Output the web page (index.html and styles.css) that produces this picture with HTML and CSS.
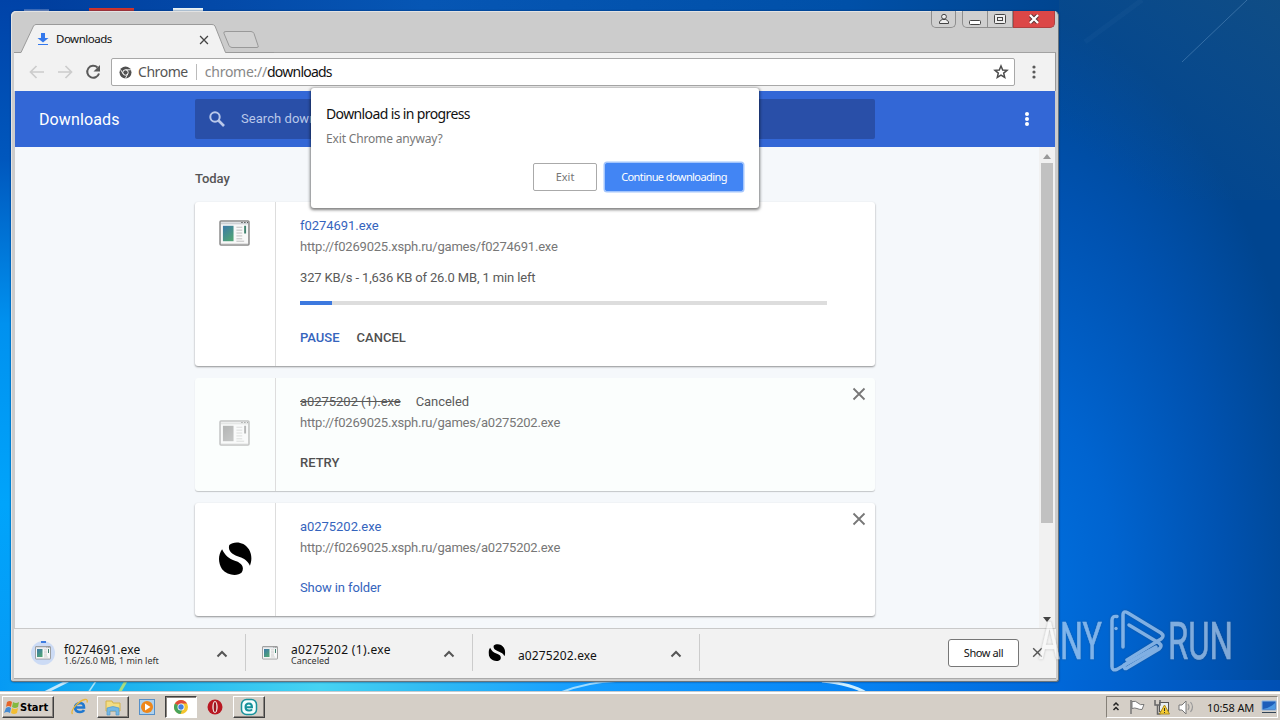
FILE: index.html
```html
<!DOCTYPE html>
<html lang="en">
<head>
<meta charset="utf-8">
<title>Downloads</title>
<link rel="stylesheet" href="styles.css">
</head>
<body>
<svg class="defs" width="0" height="0" aria-hidden="true">
  <defs>
    <linearGradient id="pane" x1="0" y1="0" x2=".6" y2="1"><stop offset="0" stop-color="#3b78a8"/><stop offset="1" stop-color="#4fa277"/></linearGradient>
    <symbol id="app" viewBox="0 0 32 28">
      <rect x="1" y="1" width="30" height="25" rx="1" fill="#f8f8f8" stroke="#8b8b8b" stroke-width="1.6"/>
      <path d="M2 3.5h28" stroke="#ccd0d4" stroke-width="2"/>
      <path d="M23 2.6h1.5M26 2.6h1.5M29 2.6h1" stroke="#555" stroke-width="1.2"/>
      <rect x="4" y="6" width="11" height="16" fill="url(#pane)"/>
      <path d="M18 7.5h6M18 10.5h6M18 13.5h6M18 16.5h6M18 19.5h6M18 22h8" stroke="#bbb"/>
      <path d="M27 6v8" stroke="#41826f" stroke-width="2"/>
      <path d="M2 24.5h28" stroke="#ddd"/>
    </symbol>
    <symbol id="ess" viewBox="0 0 32 32">
      <path d="M10 3C14-1 24-1 29 7c3 5 3 11 1 16-2-5-6-7-10-8.500C14 12.500 8 9 10 3Z"/>
      <path d="M3 7C6 13 9 16 16 18.500c6 2 9 6 6 11-4 4-14 3-19-3C-1 20-1 13 3 7Z"/>
    </symbol>
    <symbol id="cross" viewBox="0 0 14 14"><path d="M1.500 1.500l11 11M12.500 1.500l-11 11" fill="none" stroke="currentColor" stroke-width="1.800"/></symbol>
    <symbol id="caret" viewBox="0 0 12 8"><path d="M1.500 6.500L6 2l4.500 4.500" fill="none" stroke="#555" stroke-width="2"/></symbol>
  </defs>
</svg>
<div class="desktop">
  <svg class="wallpaper" width="1280" height="720" viewBox="0 0 1280 720">
    <defs>
      <radialGradient id="glow" gradientUnits="userSpaceOnUse" cx="1010" cy="600" r="560" gradientTransform="translate(1010 600) scale(.55 1.050) translate(-1010 -600)">
        <stop offset="0" stop-color="#0072e2"/><stop offset=".35" stop-color="#0064d0"/><stop offset=".7" stop-color="#0052b0"/><stop offset="1" stop-color="#004590"/>
      </radialGradient>
      <linearGradient id="left" x1="0" y1="0" x2="0" y2="1"><stop offset="0" stop-color="#0043a8"/><stop offset=".22" stop-color="#0057bd"/><stop offset=".45" stop-color="#0091ef"/><stop offset=".7" stop-color="#00a4fb"/><stop offset="1" stop-color="#0898f4"/></linearGradient>
      <linearGradient id="bottom"><stop offset="0" stop-color="#069af4"/><stop offset=".1" stop-color="#1eb3ee"/><stop offset=".25" stop-color="#46d3f2"/><stop offset=".33" stop-color="#32bcf2"/><stop offset=".45" stop-color="#169eff"/><stop offset=".65" stop-color="#0786f6"/><stop offset=".82" stop-color="#0068da"/><stop offset="1" stop-color="#0050b4"/></linearGradient>
      <linearGradient id="top"><stop offset="0" stop-color="#003c9c"/><stop offset=".4" stop-color="#0656b4"/><stop offset=".8" stop-color="#0050a8"/><stop offset="1" stop-color="#004590"/></linearGradient>
      <linearGradient id="corner" x1=".3" y1=".9" x2="1" y2="0"><stop offset="0" stop-color="#14508a" stop-opacity="0"/><stop offset="1" stop-color="#165080" stop-opacity=".7"/></linearGradient>
    </defs>
    <rect width="1280" height="720" fill="url(#glow)"/>
    <rect width="1059" height="14" fill="url(#top)"/>
    <rect width="40" height="720" fill="url(#left)"/>
    <rect y="680" width="1280" height="14" fill="url(#bottom)"/>
    <rect x="1059" width="221" height="200" fill="url(#corner)"/>
    <path d="M1247 0L1182 62" stroke="#5f93c4" stroke-opacity=".5"/>
    <path d="M1142 0L1085 42" stroke="#5f93c4" stroke-opacity=".06" stroke-width="5"/>
    <path d="M44 693L68 681" stroke="#fff" stroke-opacity=".75" stroke-width="3"/>
    <path d="M88 693L96 681" stroke="#a8e4f8" stroke-width="1.500"/>
    <path d="M119 693L126 681" stroke="#a8dc80" stroke-width="3"/>
    <path d="M562 692q26-10 54-11" fill="none" stroke="#a0dcff" stroke-width="2"/>
    <path d="M822 681q30 3 44 12" fill="none" stroke="#cdeeff" stroke-width="3"/>
    <path d="M24 10.500h25" stroke="#7f99cf" stroke-width="2"/><path d="M89 9.500h45" stroke="#d1342b" stroke-width="3"/><path d="M173 9.500h30" stroke="#e8f2f4" stroke-width="3"/>
  </svg>

  <main class="window">
    <div class="titlebar">
      <svg class="tabs" width="260" height="29" viewBox="0 0 260 29">
        <path d="M0 28.500H7L19.500 2Q20.500 .5 22 .5H198Q200 .5 201 2L211.500 28.500H260V29H0Z" fill="#f2f2f2"/>
        <path d="M0 28.500H7L19.500 2Q20.500 .5 22 .5H198Q200 .5 201 2L211.500 28.500H260" fill="none" stroke="#9a9a9a"/>
        <path d="M212 7.500h25q2 0 3 2l4 12q1 2-1 2h-25q-2 0-3-2l-5-12q-1-2 2-2Z" fill="#d2d2d2" stroke="#999"/>
        <path d="M27 9h4v5h3.500L29 18.500 23.500 14H27Z" fill="#3478ec"/><path d="M24 20.500h10" stroke="#3478ec" stroke-width="1"/>
      </svg>
      <span class="tab-title">Downloads</span>
      <svg class="tab-close" width="10" height="10"><use href="#cross"/></svg>
      <div class="controls">
        <span class="ctl user"><svg width="12" height="12" viewBox="0 0 12 12" fill="#eee" stroke="#444"><path d="M1.500 10.500V9Q2 7 4.500 6.500H7.500Q10 7 10.500 9v1.500Z"/><circle cx="6" cy="3.700" r="2.400"/></svg></span>
        <span class="ctl min"><svg width="12" height="12" viewBox="0 0 12 12"><rect x=".5" y="7.500" width="11" height="4" rx="1" fill="#fff" stroke="#444"/></svg></span>
        <span class="ctl max"><svg width="12" height="12" viewBox="0 0 12 12" fill="#eee" stroke="#444"><rect x=".5" y="1.500" width="11" height="9" rx="1"/><rect x="3.500" y="4.500" width="5" height="3"/></svg></span>
        <span class="ctl shut"><svg width="12" height="12" viewBox="0 0 12 12"><path d="M2.500 2.500l7 7M9.500 2.500l-7 7" stroke="#533" stroke-width="4"/><path d="M2 2l8 8M10 2l-8 8" stroke="#fff" stroke-width="2.300"/></svg></span>
      </div>
    </div>

    <div class="toolbar">
      <svg class="nav" width="76" height="18" viewBox="0 0 76 18" fill="none">
        <path d="M16 9H3M8.500 3L2.500 9l6 6" stroke="#ccc" stroke-width="1.700"/><path d="M30 9h13M37.500 3l6 6-6 6" stroke="#ccc" stroke-width="1.700"/>
        <path d="M69.500 4.500A6 6 0 1 0 71 10.500" stroke="#5a5a5a" stroke-width="2"/><path d="M72 2v6.500h-6.500Z" fill="#5a5a5a"/>
      </svg>
      <div class="omnibox">
        <svg width="13" height="13" viewBox="0 0 13 13"><circle cx="6.500" cy="6.500" r="6" fill="#505050"/><circle cx="6.500" cy="6.500" r="2.700" fill="none" stroke="#fff"/><path d="M6.500 3.800h5.300M4.100 7.800L1.500 3.500M8.800 7.800L6.400 12.500" stroke="#fff" stroke-width=".9"/></svg>
        <span class="origin">Chrome</span><i></i><span class="scheme">chrome://</span><span class="path">downloads</span>
        <svg class="star" width="16" height="16" viewBox="0 0 16 16"><path d="M8 2l1.700 4 4.300.3-3.300 2.800 1 4.300L8 11.100l-3.700 2.300 1-4.300L2 6.300 6.300 6Z" fill="none" stroke="#4c4c4c" stroke-width="1.500"/></svg>
      </div>
      <svg class="menu" width="4" height="14" fill="#5a5a5a"><circle cx="2" cy="2" r="1.600"/><circle cx="2" cy="7" r="1.600"/><circle cx="2" cy="12" r="1.600"/></svg>
    </div>

    <header class="header">
      <h1>Downloads</h1>
      <div class="search"><svg width="18" height="18" viewBox="0 0 18 18" fill="none" stroke="#b9c8ea"><circle cx="7" cy="7" r="4.700" stroke-width="2"/><path d="M10.500 10.500l5.500 5.500" stroke-width="2.600"/></svg><span>Search downloads</span></div>
      <svg class="more" width="4" height="14" fill="#fff"><circle cx="2" cy="2" r="2"/><circle cx="2" cy="7" r="2"/><circle cx="2" cy="12" r="2"/></svg>
    </header>

    <div class="content">
      <div class="list">
        <h2>Today</h2>
        <section class="card first">
          <div class="thumb top"><svg width="31" height="27"><use href="#app"/></svg></div>
          <div class="info">
            <div class="name link">f0274691.exe</div>
            <div class="url">http://f0269025.xsph.ru/games/f0274691.exe</div>
            <div class="status">327 KB/s - 1,636 KB of 26.0 MB, 1 min left</div>
            <div class="progress"><b></b></div>
            <div class="actions after-bar"><span class="link">PAUSE</span><span>CANCEL</span></div>
          </div>
        </section>
        <section class="card off">
          <div class="thumb gray"><svg width="31" height="27"><use href="#app"/></svg></div>
          <div class="info">
            <div class="name"><s>a0275202 (1).exe</s><span class="tag">Canceled</span></div>
            <div class="url">http://f0269025.xsph.ru/games/a0275202.exe</div>
            <div class="actions"><span>RETRY</span></div>
          </div>
          <svg class="remove" width="14" height="14"><use href="#cross"/></svg>
        </section>
        <section class="card">
          <div class="thumb"><svg width="33" height="33"><use href="#ess"/></svg></div>
          <div class="info">
            <div class="name link">a0275202.exe</div>
            <div class="url">http://f0269025.xsph.ru/games/a0275202.exe</div>
            <div class="actions plain"><span class="link">Show in folder</span></div>
          </div>
          <svg class="remove" width="14" height="14"><use href="#cross"/></svg>
        </section>
      </div>
      <div class="scroll">
        <svg width="8" height="5"><path d="M0 5L4 0l4 5Z" fill="#999"/></svg>
        <div class="handle"></div>
        <svg class="down" width="8" height="5"><path d="M0 0h8L4 5Z" fill="#444"/></svg>
      </div>
    </div>

    <footer class="shelf">
      <div class="item">
        <svg class="pic" width="26" height="26" viewBox="0 0 26 26"><circle cx="13" cy="13" r="12" fill="#ccdbf5"/><path d="M11 2h5" stroke="#3e7de0" stroke-width="2"/><use href="#app" x="4.500" y="6" width="17" height="14"/></svg>
        <div class="words"><div class="file w1">f0274691.exe</div><div class="note">1.6/26.0 MB, 1 min left</div></div>
        <svg class="caret" width="12" height="8"><use href="#caret"/></svg>
      </div>
      <div class="item">
        <svg class="pic" width="26" height="26" viewBox="0 0 26 26"><use href="#app" x="4.500" y="6" width="17" height="14"/></svg>
        <div class="words"><div class="file w2">a0275202 (1).exe</div><div class="note">Canceled</div></div>
        <svg class="caret" width="12" height="8"><use href="#caret"/></svg>
      </div>
      <div class="item">
        <svg class="pic" width="26" height="26" viewBox="0 0 26 26"><use href="#ess" x="4.500" y="4" width="17" height="17"/></svg>
        <div class="words single"><div class="file w1">a0275202.exe</div></div>
        <svg class="caret" width="12" height="8"><use href="#caret"/></svg>
      </div>
      <button class="all">Show all</button>
      <svg class="shelf-close" width="11" height="11"><use href="#cross"/></svg>
    </footer>
  </main>

  <div class="dialog" role="dialog">
    <div class="ask">Download is in progress</div>
    <div class="detail">Exit Chrome anyway?</div>
    <div class="buttons"><button>Exit</button><button class="primary">Continue downloading</button></div>
  </div>

  <svg class="watermark" width="240" height="80" viewBox="0 0 240 80">
    <g font-family="Roboto, sans-serif" font-size="52" fill="#fff" stroke="#fff" stroke-width=".6">
      <text x="9" y="53" textLength="63" lengthAdjust="spacingAndGlyphs">ANY</text>
      <text x="138" y="53" textLength="65" lengthAdjust="spacingAndGlyphs">RUN</text>
    </g>
    <g fill="none" stroke="#fff" stroke-width="3.500" stroke-linejoin="round" stroke-linecap="round">
      <path d="M86 22.500v0M87 23"/><path d="M87 12q-5-1-5 4V64q0 5 5 3l32-19" transform="translate(0 -1) scale(1 .96)"/><path d="M93 41V9q0-5 5-2l33 20q4 3 0 6L97 54"/><path d="M99 19l30 18q4 3 0 6L97 62q-3 2-3-3l32-18"/>
    </g>
  </svg>

  <div class="taskbar">
    <div class="start"><svg width="16" height="16" viewBox="0 0 16 16"><path d="M3 3q3-2 5 0L7 8Q4 6 2 8Z" fill="#e66528"/><path d="M9 3q3 2 6 0l-1 5q-3 2-6 0Z" fill="#83b942"/><path d="M2 9q3-2 5 0l-1 5q-3-2-6 0Z" fill="#458bd2"/><path d="M8 9q3 2 6 0l-1 5q-3 2-6 0Z" fill="#f2bd32"/></svg><span>Start</span></div>
    <span class="app ie"><svg width="18" height="18" viewBox="0 0 18 18" fill="none"><path d="M4.500 9.500H13Q13 5 9 5 4 5.500 4 10q.5 4 5 4 3 0 4-2" stroke="#2078cf" stroke-width="2.600"/><path d="M1.500 16C-1 13 7 3 14 1.500q3-.5 2 3" stroke="#eab535" stroke-width="1.300"/></svg></span>
    <span class="app raised"><svg width="18" height="18" viewBox="0 0 18 18"><path d="M2 3h6l1 2h7v8H2Z" fill="#f3dd83" stroke="#d4b24b"/><path d="M3 10q6-3 12 0v7h-3v-4H6v4H3Z" fill="#74b8e5" stroke="#5399cc" stroke-width=".7"/></svg></span>
    <span class="app"><svg width="18" height="18" viewBox="0 0 18 18"><rect x="1.500" y="1.500" width="15" height="15" fill="#aed1ed" stroke="#558fc8"/><circle cx="9" cy="9" r="6" fill="#ee871b"/><path d="M7 5.500l5.500 3.500L7 12.500Z" fill="#fff"/></svg></span>
    <span class="app raised pressed"><svg width="16" height="16" viewBox="0 0 16 16"><circle cx="8" cy="8" r="7" fill="#f4c52e"/><path d="M8 8L1.900 4.500A7 7 0 0 1 14 4.500H8Z" fill="#df4b3b"/><path d="M8 8L1.900 4.500A7 7 0 0 0 7.500 15L10 9Z" fill="#48a35b"/><circle cx="8" cy="8" r="3.500" fill="#fff"/><circle cx="8" cy="8" r="2.700" fill="#4480df"/></svg></span>
    <span class="app opera"><svg width="18" height="18" viewBox="0 0 18 18"><circle cx="9" cy="9" r="7.500" fill="#b91722"/><ellipse cx="9" cy="9" rx="2.700" ry="6" fill="#eee2df"/><ellipse cx="9" cy="9" rx="1.300" ry="5" fill="#9c1520"/></svg></span>
    <span class="app raised"><svg width="18" height="18" viewBox="0 0 18 18" fill="none" stroke="#16929b"><rect x="1.500" y="1.500" width="15" height="15" rx="5" fill="#f4ffff" stroke-width="1.500"/><path d="M5.500 9.200h6.500Q12 5.500 9 5.500 5.500 5.500 5.500 9t3.500 3.500q2 0 3-1.200" stroke-width="2"/></svg></span>
    <div class="tray">
      <svg width="92" height="18" viewBox="0 0 92 18" fill="none">
        <path d="M6.500 7.500L9 5l2.500 2.500M6.500 12L9 9.500l2.500 2.500" stroke="#222" stroke-width="1.500"/>
        <path d="M24 2v14" stroke="#777" stroke-width="1.500"/><path d="M25 3.500q4-1 6 1.500t6 1.500l-2 5q-3 0-5-1t-5 0Z" fill="#fff" stroke="#777"/>
        <rect x="52.500" y="4.500" width="9" height="9" fill="#e7edf0" stroke="#555"/><path d="M48 2v5h5V2M50.500 7v9h3" stroke="#666" stroke-width="1.500"/><path d="M57.500 7l5 9h-10Z" fill="#f5cc32" stroke="#ae8d1d"/><path d="M57.500 10v3M57.500 14v1" stroke="#333"/>
        <path d="M72 7h3l4-4v13l-4-4h-3Z" fill="#fff" stroke="#777"/><path d="M81 6q2 3 0 6M83.500 4q4 5 0 10" stroke="#999" stroke-width="1.200"/>
      </svg>
      <span class="clock">10:58 AM</span>
      <svg width="16" height="14" viewBox="0 0 16 14"><path d="M1 1h14v9H1Z" fill="#1d5eba" stroke="#8bb4df"/><path d="M2 9q7-1 12-6v6Z" fill="#4d99e3"/><path d="M1 12.500h14" stroke="#345"/></svg>
    </div>
  </div>
</div>
</body>
</html>
```
FILE: styles.css
```css
* { box-sizing: border-box; }
body { margin: 0; overflow: hidden; font-family: "Noto Sans", sans-serif; }
svg { flex: none; display: block; }
.defs { position: absolute; }
h1, h2 { margin: 0; font-weight: 400; }
button { font-family: inherit; padding: 0; white-space: nowrap; }
span { white-space: nowrap; }
.desktop { position: relative; width: 1280px; height: 720px; overflow: hidden; }
.wallpaper { position: absolute; left: 0; top: 0; }

.window { position: absolute; left: 11px; top: 11px; width: 1048px; height: 671px; padding: 0 2px 2px 3px; background: #ccc; border: solid #69747c; border-width: 0 1px 1px 0; border-radius: 5px 5px 3px 3px; display: flex; flex-direction: column; box-shadow: inset 1px 1px #e3e3e3, 0 0 2px #00306b; }
.titlebar { height: 42px; display: flex; position: relative; border-bottom: 1px solid #a2a2a2; flex: none; }
.tabs { align-self: flex-end; margin-bottom: -1px; }
.tab-title { position: absolute; left: 42px; top: 20px; font-size: 11px; line-height: 16px; color: #111; letter-spacing: -.45px; }
.tab-title { letter-spacing: -.5px; font-size: 11.500px; }
.tab-close { position: absolute; left: 185px; top: 24px; color: #444; }
.controls { display: flex; margin-left: auto; height: 17px; }
.ctl { display: flex; align-items: center; justify-content: center; border: 1px solid #8e8e8e; border-top: 0; background: #cfcfcf; height: 17px; }
.user { width: 25px; border-radius: 0 0 5px 5px; margin-right: 6px; }
.min { width: 26px; border-radius: 0 0 0 5px; }
.max { width: 25px; border-left: 0; }
.shut { width: 42px; background: #dc4747; border-color: #b04040; border-radius: 0 0 5px 0; margin-right: 1px; }

.toolbar { height: 38px; background: #f2f2f2; display: flex; align-items: center; padding: 0 19px 0 14px; flex: none; border-right: 1px solid #999; }
.nav { margin-right: 7px; }
.omnibox { height: 28px; flex: 1; background: #fff; border: 1px solid #a8a8a8; border-radius: 2px; display: flex; align-items: center; padding: 0 5px 0 7px; font-size: 14px; color: #555; letter-spacing: -.45px; }
.omnibox span { margin-top: -1px; }
.omnibox .origin { margin-left: 6px; }
.omnibox i { width: 1px; height: 16px; background: #bbb; margin: 0 8px; }
.scheme { color: #888; letter-spacing: -.25px; }
.path { color: #111; letter-spacing: -.77px; }
.omnibox .star { margin-left: auto; }
.menu { margin-left: 17px; }

.header { height: 56px; margin: 0 1px; background: #3367d6; color: #fff; display: flex; align-items: center; flex: none; font-family: Roboto, sans-serif; }
h1 { width: 156px; font-size: 16px; margin-left: 24px; letter-spacing: .12px; }
.search { width: 680px; height: 40px; background: #294fa8; border-radius: 2px; display: flex; align-items: center; padding-left: 13px; font-size: 13px; color: #b9c8ea; letter-spacing: .05px; }
.search span { margin: -2px 0 0 15px; }
.more { margin-left: 150px; }

.content { flex: 1; min-height: 0; overflow: hidden; margin: 0 1px; background: #f5f8fb; display: flex; justify-content: space-between; font: 13px/20px Roboto, sans-serif; }
.list { width: 680px; margin-left: 180px; }
h2 { font-size: 13px; line-height: 20px; font-weight: 500; color: #555; padding-top: 22px; margin-bottom: 13px; letter-spacing: -.05px; }
.card { height: 113px; margin-bottom: 12px; background: #fff; border-radius: 3px; display: flex; position: relative; box-shadow: 0 1px 2px rgba(0,0,0,.42); }
.card.first { height: 164px; }
.card.off { background: #fbfefd; box-shadow: 0 1px 1px rgba(0,0,0,.2); }
.thumb { width: 81px; border-right: 1px solid #ddd; display: flex; align-items: center; justify-content: center; padding-bottom: 3px; }
.thumb.top { align-items: flex-start; padding-top: 18px; }
.thumb.top svg, .gray svg { margin-right: 2px; }
.gray svg { filter: grayscale(1); opacity: .5; }
.info { padding: 14px 0 0 24px; color: #5a5a5a; }
.url { margin-top: 1px; color: #777; letter-spacing: -.21px; }
.link { color: #3564bd; }
.name { letter-spacing: -.04px; }
.tag { margin-left: 15px; }
.status { margin-top: 11px; letter-spacing: -.14px; }
.progress { margin-top: 13px; width: 527px; height: 4px; background: #ddd; }
.progress b { display: block; width: 32px; height: 4px; background: #3d79df; }
.actions { margin-top: 20px; font-weight: 500; display: flex; gap: 17px; color: #505050; }
.actions.after-bar { margin-top: 23px; }
.actions.plain { font-weight: 400; letter-spacing: -.1px; }
.remove { position: absolute; right: 9px; top: 9px; color: #777; }
.scroll { width: 16px; background: #f1f1f1; display: flex; flex-direction: column; align-items: center; padding-top: 7px; }
.handle { width: 12px; height: 360px; margin-top: 4px; background: #c1c1c1; }
.down { margin-top: auto; margin-bottom: 6px; }

.shelf { height: 51px; background: #f2f2f2; border-top: 1px solid #c9c9c9; border-bottom: 1px solid #aaa; display: flex; align-items: center; padding: 0 0 2px 5px; flex: none; }
.item { width: 227px; height: 37px; border-right: 1px solid #ccc; display: flex; align-items: center; padding-right: 17px; }
.pic { margin-left: 11px; }
.words { margin-left: 8px; white-space: nowrap; padding-top: 2px; }
.words.single { padding-top: 5px; }
.file { font-size: 12px; line-height: 13px; color: #111; }
.w1 { letter-spacing: .13px; }
.w2 { letter-spacing: .33px; }
.note { font-size: 9px; line-height: 9px; color: #333; }
.caret { margin-left: auto; margin-top: 2px; }
.all { width: 71px; height: 28px; background: #fff; border: 1px solid #777; border-radius: 3px; font-size: 11px; color: #111; margin-left: auto; letter-spacing: -.4px; }
.shelf-close { margin: 0 13px; color: #555; }

.dialog { position: absolute; left: 311px; top: 88px; width: 448px; height: 120px; background: #fff; border-radius: 3px; padding: 16px 15px; box-shadow: 0 1px 3px 1px rgba(0,0,0,.5); }
.ask { font-size: 14px; line-height: 20px; color: #111; letter-spacing: -.62px; }
.detail { font-size: 12px; line-height: 18px; margin-top: 6px; color: #777; letter-spacing: -.16px; }
.buttons { display: flex; justify-content: flex-end; gap: 8px; margin-top: 15px; }
.buttons button { width: 64px; height: 28px; background: #fff; border: 1px solid #aaa; border-radius: 2px; color: #777; font-size: 11px; padding-bottom: 2px; }
.buttons .primary { width: 138px; background: #4285f4; border-color: #4285f4; color: #fff; margin-right: 1px; box-shadow: 0 0 0 1.500px #a3c5fc; letter-spacing: -.58px; }

.watermark { position: absolute; left: 1030px; top: 606px; opacity: .5; filter: drop-shadow(0 0 1px rgba(60,60,60,.6)); }

.taskbar { position: absolute; left: 0; bottom: 0; width: 1280px; height: 29px; background: #d5cfc7; border-top: 1px solid #c5ccd0; box-shadow: inset 0 2px #fff; display: flex; align-items: center; padding: 2px 2px 0; }
.start, .raised { background: #d5cfc7; border: 1px solid; border-color: #fff #404040 #404040 #fff; box-shadow: inset -1px -1px #8a8580; }
.start { width: 52px; height: 22px; display: flex; align-items: center; padding-left: 1px; font: bold 11px "DejaVu Sans Condensed", "DejaVu Sans", sans-serif; }
.app { width: 36px; height: 22px; display: flex; align-items: center; justify-content: center; }
.ie { margin-left: 8px; width: 35px; }
.raised { width: 32px; }
.pressed { background: #fff; border-color: #404040 #fff #fff #404040; box-shadow: inset 1px 1px #8a8580; }
.tray { margin-left: auto; width: 172px; height: 22px; border: 1px solid; border-color: #858078 #fff #fff #858078; display: flex; align-items: center; }
.clock { font-size: 11px; color: #111; margin: 0 7px 0 8px; letter-spacing: -.1px; }
```
